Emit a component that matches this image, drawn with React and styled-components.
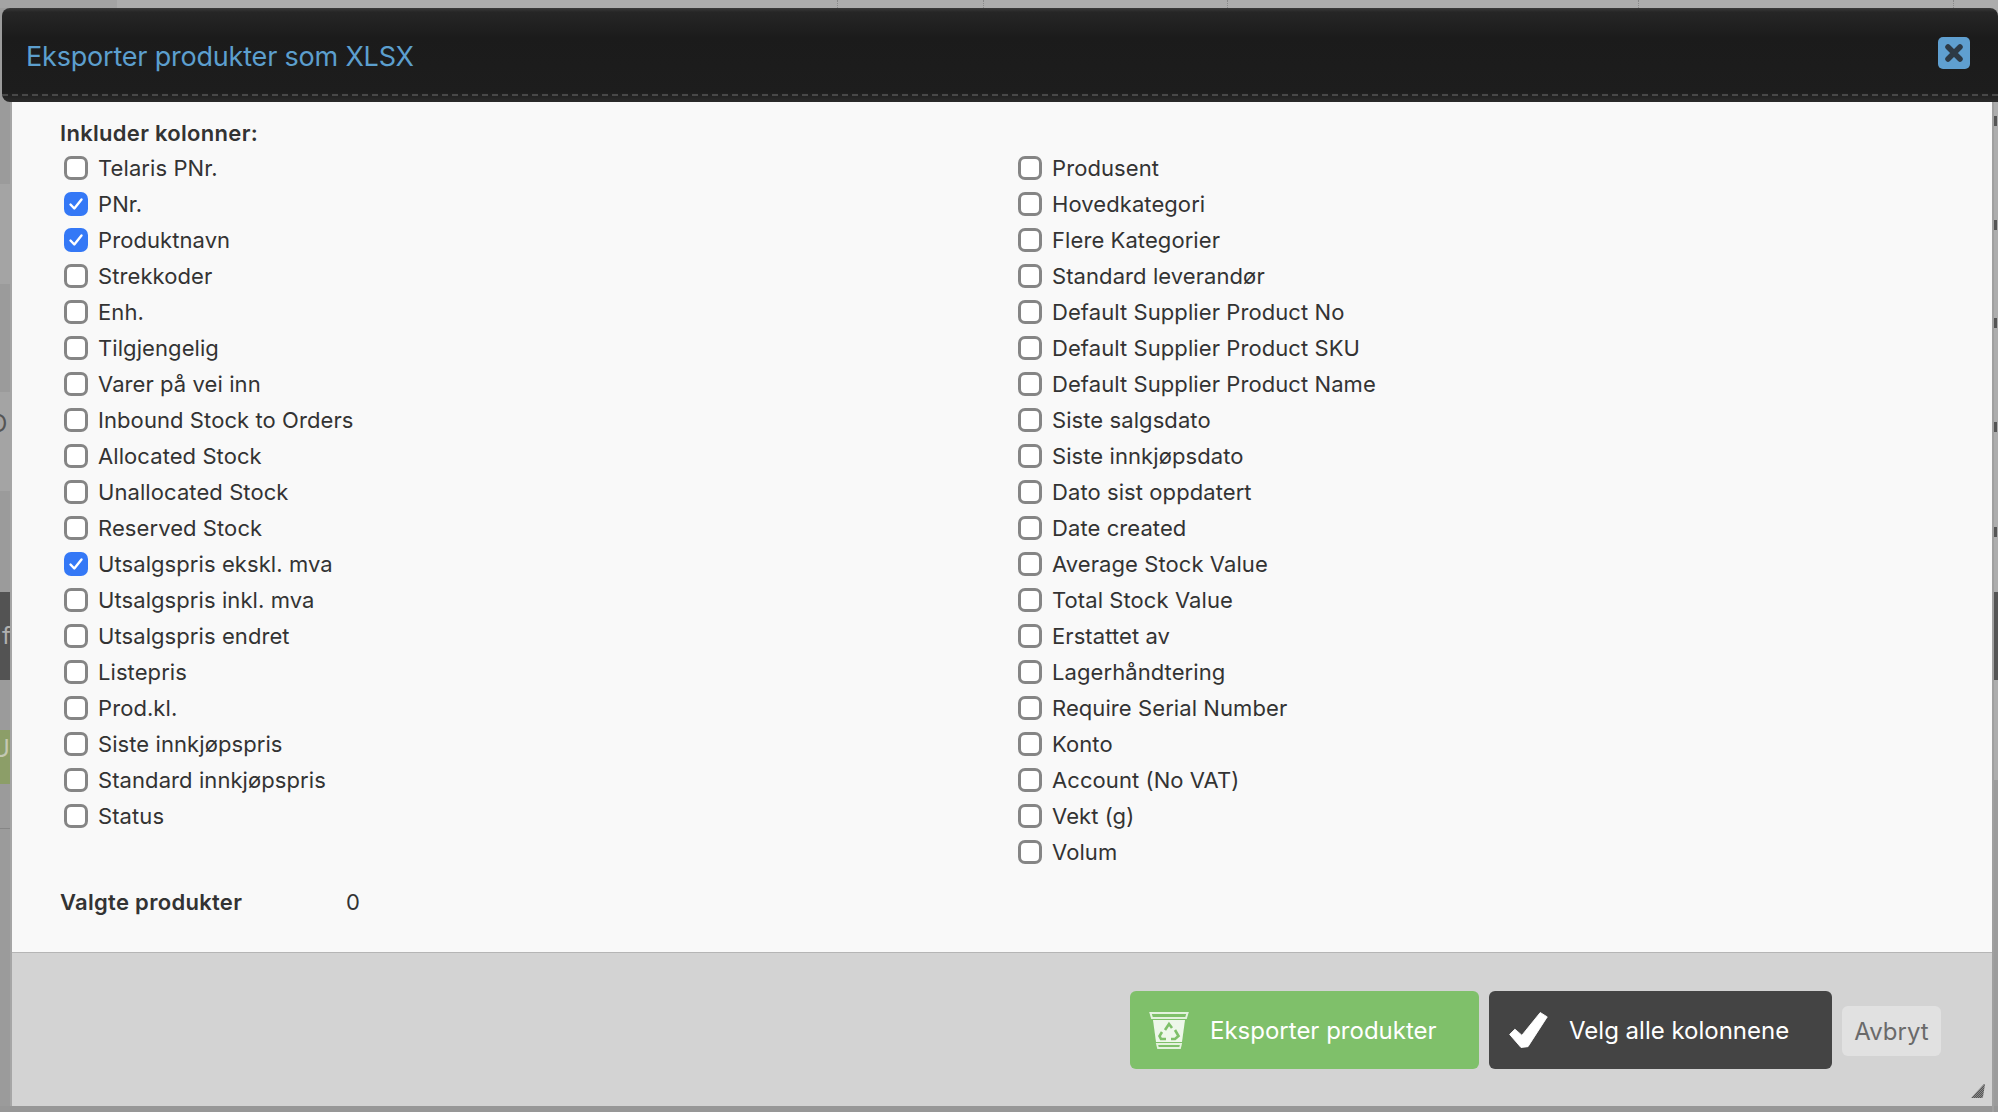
import React from 'react';
import styled, { createGlobalStyle } from 'styled-components';

const Global = createGlobalStyle`
  html, body { margin: 0; padding: 0; height: 100%; overflow: hidden; background: #acacac; }
  #root { height: 100%; }
`;

const Page = styled.div`
  position: relative;
  width: 1998px;
  height: 1112px;
  overflow: hidden;
  background: #adadad;
  font-family: Inter, "Noto Sans", sans-serif;
  padding-top: 8px;
  box-sizing: border-box;
`;

/* Dimmed page showing through behind the dialog */
const Patch = styled.div`
  position: absolute;
  left: ${p => p.$left}px;
  top: ${p => p.$top}px;
  width: ${p => p.$width}px;
  height: ${p => p.$height}px;
  background: ${p => p.$color};
`;

const DimGlyph = styled.span`
  position: absolute;
  left: ${p => p.$left}px;
  top: ${p => p.$top}px;
  font-size: ${p => p.$size}px;
  line-height: 1;
  color: ${p => p.$color};
`;

const Separator = styled.div`
  position: absolute;
  top: 0;
  left: ${p => p.$left}px;
  height: 8px;
  border-left: 1px dotted #8a8a8a;
`;

const Modal = styled.div`
  position: relative;
  display: flex;
  flex-direction: column;
  height: 1098px;
  margin-left: 12px;
  margin-right: 6px;
`;

const Header = styled.header`
  position: relative;
  display: flex;
  align-items: center;
  justify-content: space-between;
  box-sizing: border-box;
  height: 94px;
  margin-left: -10px;
  margin-right: -6px;
  padding: 0 26px 2px 24px;
  border-radius: 8px 8px 0 8px;
  background: linear-gradient(#3b3b3b 0, #262626 4px, #1b1b1b 30px, #1d1d1d 84px, #2a2a2a 94px);
  &::after {
    content: '';
    position: absolute;
    left: 0;
    right: 0;
    bottom: 6px;
    border-top: 2px dashed #484848;
  }
`;

const Title = styled.h1`
  margin: 5px 0 0;
  font-size: 27px;
  line-height: 36px;
  font-weight: 400;
  letter-spacing: -0.2px;
  color: #5c9fce;
`;

const CloseButton = styled.button`
  display: flex;
  align-items: center;
  justify-content: center;
  width: 32px;
  height: 32px;
  padding: 0;
  margin: 0 2px 2px 0;
  border: 0;
  border-radius: 5px;
  background: #5f9fd0;
`;

const Body = styled.main`
  box-sizing: border-box;
  height: 851px;
  padding: 16px 52px 0 48px;
  background: #f9f9f9;
  color: #333;
  border-bottom: 1px solid #b5b5b5;
`;

const SectionLabel = styled.div`
  font-size: 22px;
  line-height: 30px;
  font-weight: 600;
  letter-spacing: 0.3px;
  color: #333;
`;

const Columns = styled.div`
  display: grid;
  grid-template-columns: 954px 1fr;
  margin-top: 2px;
`;

const Column = styled.div`
  display: flex;
  flex-direction: column;
`;

const Row = styled.label`
  display: flex;
  align-items: center;
  height: 36px;
  padding-left: 4px;
  font-size: 22px;
  letter-spacing: 0.08px;
  color: #333;
`;

const Box = styled.span`
  display: flex;
  align-items: center;
  justify-content: center;
  box-sizing: border-box;
  width: 24px;
  height: 24px;
  margin-right: 10px;
  border-radius: 7px;
  border: ${p => (p.$checked ? '0' : '3px solid #858585')};
  background: ${p => (p.$checked ? '#3478f6' : '#fff')};
`;

const SelectedRow = styled.div`
  display: flex;
  margin-top: 17px;
  font-size: 22px;
  line-height: 30px;
`;

const SelectedLabel = styled.span`
  width: 286px;
  font-weight: 600;
  letter-spacing: 0.3px;
`;

const Footer = styled.footer`
  position: relative;
  flex: 1;
  display: flex;
  align-items: flex-start;
  justify-content: flex-end;
  gap: 10px;
  box-sizing: border-box;
  padding: 38px 51px 0 0;
  background: #d3d3d3;
`;

const BigButton = styled.button`
  display: flex;
  align-items: center;
  box-sizing: border-box;
  width: ${p => p.$width}px;
  height: 78px;
  padding: 0 0 0 18px;
  border: 0;
  border-radius: 6px;
  background: ${p => p.$bg};
  color: #fff;
  font-family: inherit;
  font-size: 24px;
`;

const IconSlot = styled.span`
  display: flex;
  justify-content: center;
  width: 42px;
  margin-right: 20px;
`;

const CancelButton = styled.button`
  align-self: flex-start;
  width: 99px;
  height: 50px;
  margin-top: 15px;
  padding: 0;
  border: 0;
  border-radius: 6px;
  background: #e1e1e1;
  color: #6a6a6a;
  font-family: inherit;
  font-size: 24px;
`;

const Grip = styled.svg`
  position: absolute;
  right: 6px;
  bottom: 7px;
`;

const left = [
  ['Telaris PNr.'], ['PNr.', true], ['Produktnavn', true], ['Strekkoder'], ['Enh.'], ['Tilgjengelig'],
  ['Varer på vei inn'], ['Inbound Stock to Orders'], ['Allocated Stock'], ['Unallocated Stock'],
  ['Reserved Stock'], ['Utsalgspris ekskl. mva', true], ['Utsalgspris inkl. mva'], ['Utsalgspris endret'],
  ['Listepris'], ['Prod.kl.'], ['Siste innkjøpspris'], ['Standard innkjøpspris'], ['Status'],
];

const right = [
  'Produsent', 'Hovedkategori', 'Flere Kategorier', 'Standard leverandør', 'Default Supplier Product No',
  'Default Supplier Product SKU', 'Default Supplier Product Name', 'Siste salgsdato', 'Siste innkjøpsdato',
  'Dato sist oppdatert', 'Date created', 'Average Stock Value', 'Total Stock Value', 'Erstattet av',
  'Lagerhåndtering', 'Require Serial Number', 'Konto', 'Account (No VAT)', 'Vekt (g)', 'Volum',
].map(t => [t]);

const rightSpecks = [116, 220, 318, 422, 527];

function Option({ label, checked }) {
  return (
    <Row>
      <Box $checked={checked}>
        {checked && (
          <svg width="16" height="16" viewBox="0 0 16 16" fill="none">
            <path d="M2.5 8.5 L6.3 12.5 L13.5 3.5" stroke="#fff" strokeWidth="2.4" strokeLinecap="round" strokeLinejoin="round" />
          </svg>
        )}
      </Box>
      {label}
    </Row>
  );
}

const BinIcon = () => (
  <svg width="40" height="38" viewBox="0 0 40 38">
    <path d="M1.5 2 H38.5 L37 7 H3 Z" fill="none" stroke="#e4f2de" strokeWidth="2" />
    <path d="M4 9 H36 L33 31 H7 Z" fill="#eef7ea" />
    <path d="M8 33 H32 L31 37 H9 Z" fill="none" stroke="#e4f2de" strokeWidth="1.8" />
    <g fill="none" stroke="#7fc06a" strokeWidth="2.6">
      <path d="M16 19 L20 13 L23 17" />
      <path d="M26 19 L29.5 25 L26 28 H22" />
      <path d="M17 28 H12 L10.5 25 L13 21" />
    </g>
  </svg>
);

const TickIcon = () => (
  <svg width="48" height="46" viewBox="0 0 48 46" style={{ filter: 'blur(0.6px)' }}>
    <path d="M3 28 L9 22 L17 29 L38 3 L46 8 L24 42 L16 43 Z" fill="#fff" strokeLinejoin="round" stroke="#fff" strokeWidth="1" />
  </svg>
);

export default function App() {
  return (
    <Page>
      <Global />
      <Patch $left={0} $top={0} $width={117} $height={8} $color="#a4a4a4" />
      {[837, 983, 1227, 1638, 1953].map(x => <Separator key={x} $left={x} />)}
      <Patch $left={0} $top={8} $width={10} $height={1104} $color="#9b9b9b" />
      <Patch $left={0} $top={184} $width={10} $height={100} $color="#a4a4a4" />
      <Patch $left={0} $top={392} $width={10} $height={99} $color="#a4a4a4" />
      <DimGlyph $left={-11} $top={412} $size={24} $color="#555">O</DimGlyph>
      <Patch $left={0} $top={592} $width={10} $height={88} $color="#535353" />
      <DimGlyph $left={2} $top={624} $size={24} $color="#b0b0b0">f</DimGlyph>
      <Patch $left={0} $top={730} $width={10} $height={54} $color="#8c9e68" />
      <DimGlyph $left={-8} $top={737} $size={24} $color="#c4c9b4">U</DimGlyph>
      <Patch $left={0} $top={828} $width={10} $height={1} $color="#868686" />
      <Patch $left={10} $top={8} $width={2} $height={1104} $color="#a6a6a6" />
      <Patch $left={0} $top={1106} $width={1998} $height={6} $color="#979797" />
      <Patch $left={1992} $top={102} $width={2} $height={1010} $color="#a0a0a0" />
      <Patch $left={1994} $top={592} $width={4} $height={88} $color="#555" />
      <Patch $left={1994} $top={780} $width={4} $height={326} $color="#9c9c9c" />
      {rightSpecks.map(y => <Patch key={y} $left={1994} $top={y} $width={3} $height={10} $color="#555" />)}
      <Modal>
        <Header>
          <Title>Eksporter produkter som XLSX</Title>
          <CloseButton aria-label="Lukk">
            <svg width="20" height="20" viewBox="0 0 20 20">
              <path d="M4 4 L16 16 M16 4 L4 16" stroke="#2d3a46" strokeWidth="5.5" strokeLinecap="round" />
            </svg>
          </CloseButton>
        </Header>
        <Body>
          <SectionLabel>Inkluder kolonner:</SectionLabel>
          <Columns>
            <Column>{left.map(([t, c]) => <Option key={t} label={t} checked={c} />)}</Column>
            <Column>{right.map(([t]) => <Option key={t} label={t} />)}</Column>
          </Columns>
          <SelectedRow>
            <SelectedLabel>Valgte produkter</SelectedLabel>
            <span>0</span>
          </SelectedRow>
        </Body>
        <Footer>
          <BigButton $bg="#7fc06a" $width={349}>
            <IconSlot><BinIcon /></IconSlot>
            Eksporter produkter
          </BigButton>
          <BigButton $bg="#444444" $width={343}>
            <IconSlot><TickIcon /></IconSlot>
            Velg alle kolonnene
          </BigButton>
          <CancelButton>Avbryt</CancelButton>
          <Grip width="16" height="16" viewBox="0 0 16 16">
            <defs>
              <pattern id="grip-dither" width="2" height="2" patternUnits="userSpaceOnUse">
                <rect width="1" height="1" fill="#555" />
                <rect x="1" y="1" width="1" height="1" fill="#555" />
                <rect x="1" width="1" height="1" fill="#8a8a8a" />
                <rect y="1" width="1" height="1" fill="#8a8a8a" />
              </pattern>
            </defs>
            <path d="M1 15 L14 1 L15 1 L13 14 L12 15 Z" fill="url(#grip-dither)" />
          </Grip>
        </Footer>
      </Modal>
    </Page>
  );
}
